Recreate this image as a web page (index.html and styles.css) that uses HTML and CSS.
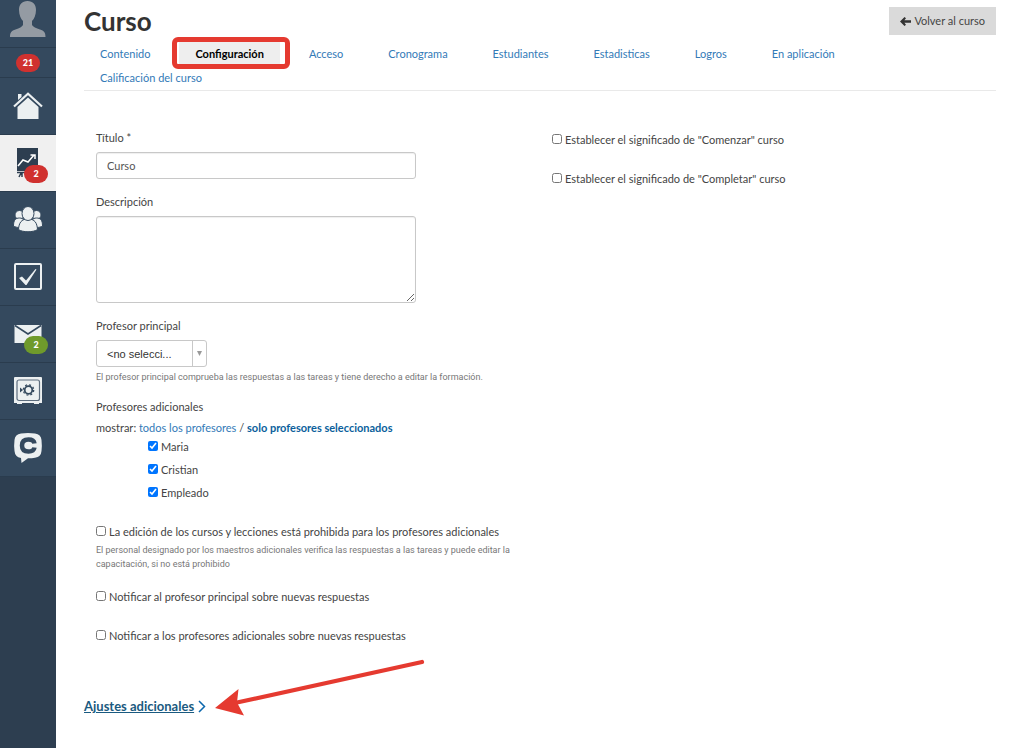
FILE: index.html
```html
<!DOCTYPE html>
<html lang="es">
<head>
<meta charset="utf-8">
<meta name="viewport" content="width=device-width, initial-scale=1">
<title>Curso</title>
<link rel="stylesheet" href="styles.css">
</head>
<body>
<div class="app">
  <nav class="sidebar" aria-label="Principal">
    <a class="side-item side-avatar" href="#" aria-label="Perfil">
      <svg width="38" height="38" viewBox="0 0 38 38"><path fill="#949ba3" d="M18.500 1C24 1 27 4.500 27 10c0 5-2 9-4 11v4c1 2 4 3 8 4.500 4 1.200 5.500 3 5.500 7.500H1c0-4.500 1.500-6.300 5.500-7.500C10.500 28 13 27 14 25v-4c-2-2-4-6-4-11 0-5.500 3-9 8.500-9z"/></svg>
    </a>
    <a class="side-item side-count" href="#"><span class="badge badge-red">21</span></a>
    <a class="side-item" href="#" aria-label="Inicio">
      <svg width="30" height="28" viewBox="0 0 30 28"><path fill="#ecf0f1" d="M5 2h3.500v3L5 8zM15 5.500 25.500 15v12h-21V15z"/><path fill="none" stroke="#ecf0f1" stroke-width="2.200" d="M1 14.500 15 1.800l14 12.700"/></svg>
    </a>
    <a class="side-item side-active" href="#" aria-label="Cursos">
      <svg width="28" height="32" viewBox="0 0 28 32"><path fill="#2d3e50" d="M3 1h21v23H3z"/><path fill="none" stroke="#fff" stroke-width="1.500" d="m4 19 5-6 5 2 6-7M16.500 8H21v4"/><path fill="none" stroke="#2d3e50" stroke-width="1.500" d="M3 25.500h21M5 30l2-4M8 26v4"/></svg>
      <span class="badge badge-red badge-corner">2</span>
    </a>
    <a class="side-item" href="#" aria-label="Usuarios">
      <svg width="30" height="28" viewBox="0 0 30 28"><g fill="#ecf0f1" stroke="#34495e" stroke-width="1"><circle cx="6.500" cy="9" r="4.500"/><circle cx="23.500" cy="9" r="4.500"/><path d="M.5 20c0-6 2-8 6-8s6 3 6 8c-3 2-9 2-12 0zM29.500 20c0-6-2-8-6-8s-6 3-6 8c3 2 9 2 12 0z"/><path d="M5.500 23.500C6 17 8 13 15 13s9 4 9.500 10.500c-4 3-15 3-19 0z"/><ellipse cx="15" cy="7.500" rx="6" ry="7"/></g></svg>
    </a>
    <a class="side-item" href="#" aria-label="Tareas">
      <svg width="28" height="28" viewBox="0 0 28 28"><rect x="1" y="1" width="26" height="25" rx="1" fill="none" stroke="#ecf0f1" stroke-width="2"/><path fill="#ecf0f1" d="m5 15 3-1.500 4 4L21.500 6l1 .5L12.500 22h-1z"/></svg>
    </a>
    <a class="side-item" href="#" aria-label="Mensajes">
      <svg width="28" height="20" viewBox="0 0 28 20"><path fill="#ecf0f1" d="M.5 1h27v18H.5z"/><path fill="none" stroke="#34495e" stroke-width="1.500" d="m1 1.500 13 8.500 13-8.500"/></svg>
      <span class="badge badge-green badge-corner">2</span>
    </a>
    <a class="side-item" href="#" aria-label="Caja">
      <svg width="28" height="28" viewBox="0 0 28 28"><path fill="#ecf0f1" d="M1 0h26q1 0 1 1v25h-3v1h-5v-1H8v1H3v-1H0V1q0-1 1-1z"/><rect x="3" y="3" width="22.500" height="20.500" rx="2" fill="none" stroke="#5d6d7e" stroke-width="1.200"/><circle cx="14.500" cy="13" r="3.800" fill="none" stroke="#34495e" stroke-width="1.800"/><circle cx="14.500" cy="13" r="5.200" fill="none" stroke="#34495e" stroke-width="1.300" stroke-dasharray="2 2.080"/><path fill="#34495e" d="m6 10.500 3 2.500-3 2.500z"/></svg>
    </a>
    <a class="side-item" href="#" aria-label="Chat">
      <svg width="30" height="32" viewBox="0 0 30 32"><path fill="#ecf0f1" d="M8 1.500Q15 .5 22 1.500q6 .8 6.500 6.500.7 6 0 11-.5 6-6.500 6.700-3 .5-7 .5L8.500 31 8 26Q2 25 1.500 19q-.7-5.500 0-11Q2 2.300 8 1.500z"/><path fill="none" stroke="#34495e" stroke-width="4.500" d="M21.500 11.500c-.5-3-3-4-6-4-4.500 0-6.500 2-6.500 6s2 6 6.500 6c3 0 5.500-1 6-4"/></svg>
    </a>
  </nav>

  <main class="content">
    <header class="head">
      <h1 class="title">Curso</h1>
      <a class="back" href="#"><svg width="11" height="9" viewBox="0 0 11 9"><path fill="#333" d="M0 4.500 4.500 0 6 1.200 4.400 3.200H11v2.600H4.400L6 7.800 4.500 9z"/></svg>Volver al curso</a>
    </header>
    <nav class="tabs" aria-label="Curso">
      <a class="tab" href="#">Contenido</a>
      <a class="tab tab-active" href="#" aria-current="page">Configuración</a>
      <a class="tab" href="#">Acceso</a>
      <a class="tab" href="#">Cronograma</a>
      <a class="tab" href="#">Estudiantes</a>
      <a class="tab" href="#">Estadisticas</a>
      <a class="tab" href="#">Logros</a>
      <a class="tab" href="#">En aplicación</a>
      <a class="tab" href="#">Calificación del curso</a>
    </nav>

    <form class="form">
      <div class="column">
        <div class="field">
          <label class="label" for="titulo">Título *</label>
          <input class="input" id="titulo" type="text" value="Curso">
        </div>
        <div class="field">
          <label class="label" for="descripcion">Descripción</label>
          <textarea class="input textarea" id="descripcion"></textarea>
        </div>
        <div class="field">
          <label class="label" for="profesor">Profesor principal</label>
          <div class="picker">
            <select class="select" id="profesor"><option>&lt;no selecci...</option></select>
            <span class="picker-arrow"><svg width="5" height="5" viewBox="0 0 5 5"><path fill="#999" d="M0 0h5L2.500 5z"/></svg></span>
          </div>
          <p class="help">El profesor principal comprueba las respuestas a las tareas y tiene derecho a editar la formación.</p>
        </div>
        <fieldset class="teachers">
          <legend class="label">Profesores adicionales</legend>
          <p class="filter">mostrar: <a class="link" href="#">todos los profesores</a> / <a class="link link-strong" href="#">solo profesores seleccionados</a></p>
          <ul class="list">
            <li><label class="check"><input class="box" type="checkbox" checked>Maria</label></li>
            <li><label class="check"><input class="box" type="checkbox" checked>Cristian</label></li>
            <li><label class="check"><input class="box" type="checkbox" checked>Empleado</label></li>
          </ul>
        </fieldset>
        <div class="editing">
          <label class="check"><input class="box" type="checkbox">La edición de los cursos y lecciones está prohibida para los profesores adicionales</label>
          <p class="help">El personal designado por los maestros adicionales verifica las respuestas a las tareas y puede editar la capacitación, si no está prohibido</p>
        </div>
        <div class="options">
          <label class="check"><input class="box" type="checkbox">Notificar al profesor principal sobre nuevas respuestas</label>
          <label class="check"><input class="box" type="checkbox">Notificar a los profesores adicionales sobre nuevas respuestas</label>
        </div>
      </div>
      <div class="column column-side">
        <label class="check"><input class="box" type="checkbox">Establecer el significado de "Comenzar" curso</label>
        <label class="check"><input class="box" type="checkbox">Establecer el significado de "Completar" curso</label>
      </div>
    </form>

    <div class="more">
      <a class="more-link" href="#"><span class="more-text">Ajustes adicionales</span><svg width="8" height="13" viewBox="0 0 8 13"><path fill="none" stroke="#0b67ad" stroke-width="1.500" d="m1 1 5.500 5.500L1 12"/></svg></a>
      <svg class="pointer" width="212" height="60" viewBox="0 0 212 60"><path fill="none" stroke="#e53a30" stroke-width="4.200" stroke-linecap="round" d="M22 44.500 207 4"/><path fill="#e53a30" d="M0 50 23.500 31 22 44.500 29 57.500z"/></svg>
    </div>
  </main>
</div>
</body>
</html>
```

FILE: styles.css
```css
* { box-sizing: border-box; }

body {
  margin: 0;
  background: #fff;
  color: #444;
  font: 11px/16px Lato, "Open Sans", sans-serif;
}

h1, p, ul, fieldset, legend { margin: 0; padding: 0; border: 0; }
ul { list-style: none; }
a { color: #337ab7; text-decoration: none; }
svg { display: block; flex: none; }

.app { display: flex; min-height: 100vh; }

/* Sidebar */
.sidebar { flex: none; width: 56px; background: #2d3e50; }
.side-item {
  position: relative;
  display: flex;
  align-items: center;
  justify-content: center;
  height: 57px;
  background: #34495e;
  border-bottom: 1px solid #2a3c4e;
}
.side-avatar { height: 48px; align-items: flex-start; }
.side-count { height: 30px; }
.side-active { background: #f0f0f0; }
.badge {
  min-width: 24px;
  border-radius: 9px;
  color: #fff;
  font-size: 9px;
  font-weight: 900;
  line-height: 18px;
  text-align: center;
}
.badge-red { background: #d0312f; }
.badge-green { background: #6f9a2b; }
.badge-corner { position: absolute; right: 8px; bottom: 8px; }

/* Header */
.content { flex: 1; min-width: 0; padding: 7px 25px 32px 28px; }
.head { display: flex; justify-content: space-between; height: 35px; }
.title { color: #333; font-size: 26px; line-height: 28px; }
.back {
  display: flex;
  align-items: center;
  gap: 3px;
  height: 28px;
  padding: 0 11px;
  background: #dadada;
  color: #444;
}

.tabs {
  display: flex;
  flex-wrap: wrap;
  column-gap: 13px;
  border-bottom: 1px solid #e9e9e9;
}
.tab { position: relative; padding: 0 16px; line-height: 24px; }
.tab-active { background: #eee; color: #000; font-weight: 700; }
.tab-active::after {
  content: "";
  position: absolute;
  inset: -5px -10px -3px -7px;
  border: 5px solid #e53a30;
  border-radius: 6px;
}

/* Form */
.form { display: grid; grid-template-columns: 1fr 1fr; padding-top: 39px; }
.column { padding: 0 12px; }
.column-side { display: flex; flex-direction: column; gap: 23px; padding-top: 2px; }
.field { margin-bottom: 15px; }
.label { display: block; margin-bottom: 6px; }
.input {
  display: block;
  width: 100%;
  max-width: 320px;
  height: 27px;
  padding: 0 10px;
  border: 1px solid #c8c8c8;
  border-radius: 3px;
  box-shadow: inset 0 1px 1px #0001;
  background: #fff;
  color: #555;
  font: inherit;
}
.textarea { height: 87px; padding: 6px 10px; resize: vertical; }

.picker {
  display: flex;
  width: 111px;
  height: 27px;
  border: 1px solid #c8c8c8;
  border-radius: 3px;
}
.select {
  flex: 1;
  min-width: 0;
  padding: 0 10px;
  border: 0;
  appearance: none;
  background: transparent;
  color: #333;
  font: 11px/16px "Liberation Sans", Arial, sans-serif;
}
.picker-arrow {
  display: flex;
  align-items: center;
  justify-content: center;
  width: 14px;
  border-left: 1px solid #c8c8c8;
}
.help { margin-top: 3px; color: #777; font: 9px/14px Roboto, "Open Sans", sans-serif; }

.filter { line-height: 14px; }
.link-strong { color: #0b5f9c; font-weight: 700; }
.list { padding-left: 52px; }
.list li { display: flex; align-items: center; height: 23px; }
.check { display: flex; align-items: center; gap: 3px; }
.box { flex: none; width: 10px; height: 10px; margin: 0 0 2px; }
.editing { margin: 20px 0 18px; }
.options { display: flex; flex-direction: column; gap: 23px; }

/* Additional settings */
.more { display: flex; position: relative; margin-top: 54px; }
.more-link { display: flex; align-items: center; gap: 4px; font-size: 13px; font-weight: 700; }
.more-text { color: #1a5a80; text-decoration: underline; }
.pointer { position: absolute; left: 131px; bottom: -4px; }
```
